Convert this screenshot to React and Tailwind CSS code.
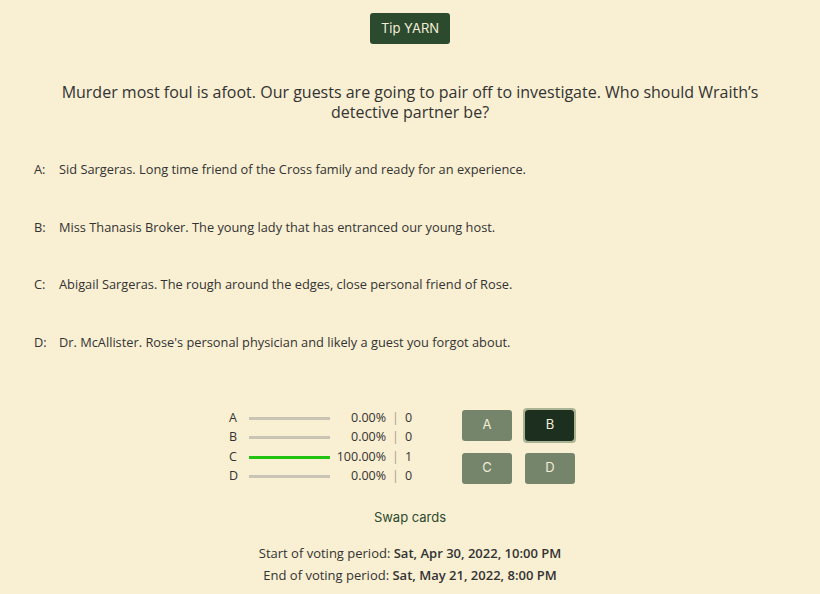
const options = [
  { key: "A", text: "Sid Sargeras. Long time friend of the Cross family and ready for an experience." },
  { key: "B", text: "Miss Thanasis Broker. The young lady that has entranced our young host." },
  { key: "C", text: "Abigail Sargeras. The rough around the edges, close personal friend of Rose." },
  { key: "D", text: "Dr. McAllister. Rose's personal physician and likely a guest you forgot about." },
];

const votes = [
  { key: "A", pct: 0, count: 0 },
  { key: "B", pct: 0, count: 0 },
  { key: "C", pct: 100, count: 1 },
  { key: "D", pct: 0, count: 0 },
];

function VoteButton({ label, selected }) {
  if (selected) {
    return (
      <div className="rounded-[4px] border-[2px] border-[#a9b393]">
        <button className="w-[49px] h-[31px] rounded-[3px] bg-[#1d2f1f] text-[13px] text-[#f3ecd6] font-['Inter',sans-serif]">
          {label}
        </button>
      </div>
    );
  }
  return (
    <button className="w-[50px] h-[31px] rounded-[3px] bg-[#74856b] text-[13px] text-[#f3ecd6] font-['Inter',sans-serif]">
      {label}
    </button>
  );
}

export default function App() {
  return (
    <div className="min-h-screen bg-[#f9efd2] text-[#333] font-['Open_Sans',sans-serif] flex flex-col items-center">
      <button className="mt-[13px] h-[31px] px-[11px] rounded-[3px] bg-[#2b4a2e] text-[#f3ecd6] text-[13px] font-['Inter',sans-serif]">
        Tip YARN
      </button>

      <h2 className="mt-[38px] px-[30px] text-center text-[16px] leading-[20px] text-[#333]">
        Murder most foul is afoot. Our guests are going to pair off to investigate. Who should Wraith’s detective
        partner be?
      </h2>

      <div className="self-stretch mt-[37px] px-[34px] flex flex-col gap-[37.5px]">
        {options.map((o) => (
          <div key={o.key} className="flex text-[12.8px] leading-[20px]">
            <span className="w-[25px]">{o.key}:</span>
            <span>{o.text}</span>
          </div>
        ))}
      </div>

      <div className="mt-[56px] flex items-center gap-[49px] mr-[14px]">
        <div className="flex flex-col">
          {votes.map((v) => (
            <div key={v.key} className="flex items-center h-[19.5px] text-[12.5px]">
              <span className="w-[20px]">{v.key}</span>
              <div className="w-[81px] h-[3px] bg-[#c9c4b5]">
                <div className="h-full bg-[#22c411]" style={{ width: `${v.pct}%` }} />
              </div>
              <span className="w-[56px] text-right">{v.pct.toFixed(2)}%</span>
              <span className="mx-[6px] text-[#a79f8a]">|</span>
              <span className="w-[8px]">{v.count}</span>
            </div>
          ))}
        </div>
        <div className="mb-[4px] grid grid-cols-[50px_54px] gap-x-[11px] gap-y-[10px] items-center justify-items-center">
          <VoteButton label="A" />
          <VoteButton label="B" selected />
          <VoteButton label="C" />
          <VoteButton label="D" />
        </div>
      </div>

      <button className="mt-[20px] text-[13px] text-[#2b4a2e] font-['Inter',sans-serif]">Swap cards</button>

      <div className="mt-[15px] text-[13px] leading-[22px] text-center">
        <div>
          Start of voting period: <span className="font-semibold">Sat, Apr 30, 2022, 10:00 PM</span>
        </div>
        <div>
          End of voting period: <span className="font-semibold">Sat, May 21, 2022, 8:00 PM</span>
        </div>
      </div>
    </div>
  );
}
